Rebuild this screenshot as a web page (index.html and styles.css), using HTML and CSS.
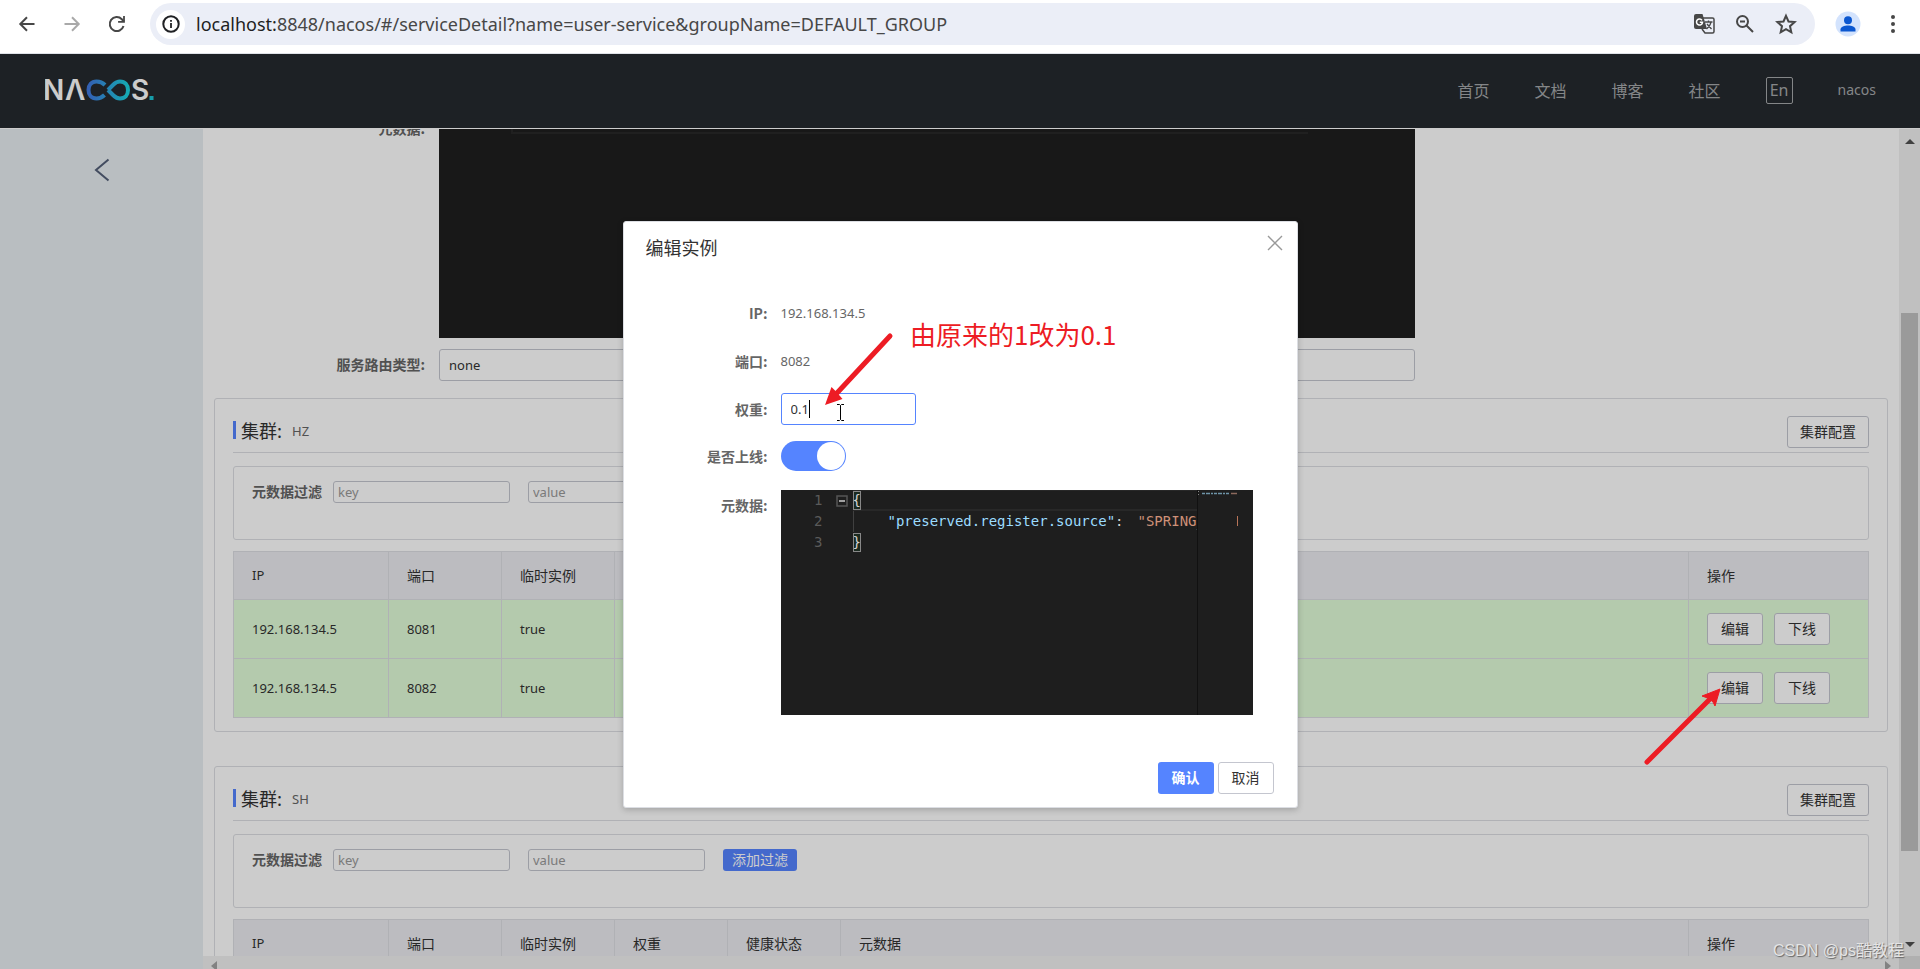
FILE: index.html
```html
<!DOCTYPE html>
<html lang="zh-CN">
<head>
<meta charset="utf-8">
<title>Nacos</title>
<link rel="stylesheet" href="styles.css">
</head>
<body>
<div class="browser">
  <button class="tool" aria-label="后退"><svg width="20" height="20" viewBox="0 0 20 20"><path d="M17.5 10H3.5M10 3.300L3.300 10l6.700 6.700" fill="none" stroke="#474747" stroke-width="2"/></svg></button>
  <button class="tool" aria-label="前进"><svg width="20" height="20" viewBox="0 0 20 20"><path d="M2.500 10h14M10 3.300l6.700 6.700-6.700 6.700" fill="none" stroke="#a9a9a9" stroke-width="2"/></svg></button>
  <button class="tool" aria-label="刷新"><svg width="20" height="20" viewBox="0 0 20 20"><path d="M16.500 12a7 7 0 1 1-1.700-6.800L17 7.500" fill="none" stroke="#474747" stroke-width="2"/><path d="M17.900 2v6.800h-6.800V7h5V2z" fill="#474747"/></svg></button>
  <div class="address">
    <span class="info"><svg width="18" height="18" viewBox="0 0 18 18"><circle cx="9" cy="9" r="7.700" fill="none" stroke="#202124" stroke-width="2"/><path d="M9 8v5M9 5v1.800" stroke="#202124" stroke-width="1.800"/></svg></span>
    <span class="url"><b>localhost:</b>8848/nacos/#/serviceDetail?name=user-service&amp;groupName=DEFAULT_GROUP</span>
    <svg width="22" height="22" viewBox="0 0 22 22"><path d="M10 5h9.500a1.500 1.500 0 0 1 1.500 1.500v12a1.500 1.500 0 0 1-1.500 1.500H12L9 16" fill="none" stroke="#474747" stroke-width="1.500"/><path d="M3 1h6.500l4.500 15H3a2 2 0 0 1-2-2V3a2 2 0 0 1 2-2z" fill="#474747"/><path d="M9 7.300A3 3 0 1 0 9.500 9.300H6.800" fill="none" stroke="#fff" stroke-width="1.500"/><path d="M12 9h7.500M15.500 7.500V9M18 9c-.5 3-2 5-4.500 7M14 11l4.500 5" fill="none" stroke="#474747" stroke-width="1.300"/></svg>
    <svg width="20" height="20" viewBox="0 0 20 20"><circle cx="7.500" cy="7.500" r="5.500" fill="none" stroke="#474747" stroke-width="2"/><path d="M11.500 11.500L18 18M5 7.500h5" stroke="#474747" stroke-width="2" fill="none"/></svg>
    <svg width="22" height="22" viewBox="0 0 22 22"><path d="M11 2.800l2.500 5.700 6.100.6-4.600 4.100 1.300 6.100-5.300-3.200-5.300 3.200L7 13.200 2.400 9.100l6.100-.6z" fill="none" stroke="#474747" stroke-width="2"/></svg>
  </div>
  <button class="avatar" aria-label="个人资料"><svg width="26" height="26" viewBox="0 0 26 26"><circle cx="13" cy="13" r="12.500" fill="#d3e3fd"/><circle cx="13" cy="9.200" r="4" fill="#0b57d0"/><path d="M5.500 20.500v-2c0-2.700 4-4 7.500-4s7.500 1.300 7.500 4v2z" fill="#0b57d0"/></svg></button>
  <button class="more" aria-label="菜单"><svg width="6" height="20" viewBox="0 0 6 20"><g fill="#474747"><circle cx="3" cy="3" r="2"/><circle cx="3" cy="10" r="2"/><circle cx="3" cy="17" r="2"/></g></svg></button>
</div>

<div class="app">
  <header class="topbar">
    <a class="logo" href="#" aria-label="Nacos"><svg width="110" height="36" viewBox="0 0 110 36">
      <defs><linearGradient id="wave" x1="0" x2="1" y1="0" y2="0"><stop offset="0" stop-color="#4078e0"/><stop offset="1" stop-color="#1cd5e0"/></linearGradient></defs>
      <g class="letters"><text x="-2" y="28">N</text><text x="20" y="28">Λ</text><text x="86" y="28">S</text></g>
      <path d="M60 13C57 10 54.500 9.500 51.500 9.500c-5 0-8 3.500-8 8.500s3 8.500 8 8.500c3 0 5.500-1 8-3.500M63 18l5.500-5.500c2-2 4-3 6.500-3 5 0 8 3.500 8 8.500s-3 8.500-8 8.500c-2.500 0-4.500-1-6.500-3L63 18" fill="none" stroke="url(#wave)" stroke-width="4"/>
      <rect x="104.500" y="24" width="4" height="4" fill="#1cc5d5"/></svg></a>
    <nav class="nav">
      <a href="#">首页</a><a href="#">文档</a><a href="#">博客</a><a href="#">社区</a>
      <button class="lang">En</button><a class="user" href="#">nacos</a>
    </nav>
  </header>
  <div class="body">
    <aside class="side"><button class="back" aria-label="返回"><svg width="16" height="24" viewBox="0 0 16 24"><path d="M14.500 1.500L2 12l12.500 10.500" fill="none" stroke="#546078" stroke-width="2"/></svg></button></aside>
    <div class="pane">
      <main class="content">
        <div class="field"><span class="label">元数据:</span><div class="dark"><div class="dark-line"></div></div></div>
        <div class="field"><label class="label" for="route">服务路由类型:</label><input id="route" class="box latin" value="none"></div>

        <section class="card">
          <div class="card-head"><h2>集群:</h2><span class="latin cluster">HZ</span><button class="btn">集群配置</button></div>
          <div class="filter"><label for="k1">元数据过滤</label><input id="k1" class="latin" placeholder="key"><input class="latin" aria-label="value" placeholder="value"><button class="add">添加过滤</button></div>
          <table>
            <colgroup><col class="c-ip"><col class="c-s"><col class="c-s"><col class="c-s"><col class="c-s"><col><col class="c-op"></colgroup>
            <thead><tr><th class="latin">IP</th><th>端口</th><th>临时实例</th><th>权重</th><th>健康状态</th><th>元数据</th><th>操作</th></tr></thead>
            <tbody class="latin">
              <tr><td>192.168.134.5</td><td>8081</td><td>true</td><td>1</td><td>true</td><td>preserved.register.source=SPRING_CLOUD</td><td><div class="ops"><button class="btn">编辑</button><button class="btn">下线</button></div></td></tr>
              <tr><td>192.168.134.5</td><td>8082</td><td>true</td><td>1</td><td>true</td><td>preserved.register.source=SPRING_CLOUD</td><td><div class="ops"><button class="btn">编辑</button><button class="btn">下线</button></div></td></tr>
            </tbody>
          </table>
        </section>

        <section class="card">
          <div class="card-head"><h2>集群:</h2><span class="latin cluster">SH</span><button class="btn">集群配置</button></div>
          <div class="filter"><label for="k2">元数据过滤</label><input id="k2" class="latin" placeholder="key"><input class="latin" aria-label="value" placeholder="value"><button class="add">添加过滤</button></div>
          <table>
            <colgroup><col class="c-ip"><col class="c-s"><col class="c-s"><col class="c-s"><col class="c-s"><col><col class="c-op"></colgroup>
            <thead><tr><th class="latin">IP</th><th>端口</th><th>临时实例</th><th>权重</th><th>健康状态</th><th>元数据</th><th>操作</th></tr></thead>
          </table>
        </section>
      </main>
      <div class="hbar"><svg width="6" height="10" viewBox="0 0 6 10"><path d="M6 0v10L0 5z" fill="#a3a3a3"/></svg><svg width="6" height="10" viewBox="0 0 6 10"><path d="M0 0v10l6-5z" fill="#a3a3a3"/></svg></div>
    </div>
    <div class="vbar">
      <svg width="10" height="5" viewBox="0 0 10 5"><path d="M0 5h10L5 0z" fill="#505050"/></svg>
      <div class="track"><div class="thumb"></div></div>
      <svg width="10" height="5" viewBox="0 0 10 5"><path d="M0 0h10L5 5z" fill="#505050"/></svg>
      <div class="corner"></div>
    </div>
  </div>

  <div class="mask">
    <div class="modal" role="dialog" aria-labelledby="mt">
      <div class="modal-head"><h1 id="mt">编辑实例</h1><button class="close" aria-label="关闭"><svg width="16" height="16" viewBox="0 0 16 16"><path d="M1 1l14 14M15 1L1 15" stroke="#999" stroke-width="1.400"/></svg></button></div>
      <div class="form">
        <span class="label">IP:</span><span class="latin val">192.168.134.5</span>
        <span class="label">端口:</span><span class="latin val">8082</span>
        <label class="label" for="w">权重:</label><span class="weight"><input id="w" class="latin" value="0.1"><i class="caret"></i></span>
        <label class="label" for="on">是否上线:</label><input id="on" class="switch" type="checkbox" checked>
        <span class="label meta">元数据:</span>
        <div class="editor">
          <div class="gutter"><span>1</span><span>2</span><span>3</span></div>
          <div class="fold"><svg width="12" height="12" viewBox="0 0 12 12"><path d="M1 1h10v10H1z" fill="none" stroke="#555" stroke-width="1.500"/><path d="M3 6h6" stroke="#ccc" stroke-width="1.500"/></svg></div>
          <div class="code">
            <div class="line current"><span class="brace">{</span></div>
            <div class="line inner"><span class="key">"preserved.register.source"</span>:<span class="str">"SPRING_CLOUD"</span></div>
            <div class="line"><span class="brace">}</span></div>
          </div>
          <div class="minimap"><svg width="56" height="40" viewBox="0 0 56 40"><path d="M4 3.500h27" stroke="#6e94a8" stroke-width="1.500" stroke-dasharray="3 1 4 1 2 1"/><path d="M33 3.500h6" stroke="#8d6a5d" stroke-width="1.500"/><path d="M39.500 26v10" stroke="#b87458"/><path d="M.5 1v1M.5 4v1" stroke="#888"/></svg></div>
        </div>
      </div>
      <div class="modal-foot"><button class="ok">确认</button><button class="btn">取消</button></div>
    </div>
  </div>
</div>

<svg class="mark mark-weight" width="72" height="78" viewBox="0 0 72 78"><path d="M67 5L14 62" stroke="#ed1c24" stroke-width="5" stroke-linecap="round"/><path d="M2 74L8.500 56l5 5 6 7z" fill="#ed1c24"/></svg>
<span class="note">由原来的1改为0.1</span>
<svg class="mark ibeam" width="9" height="17" viewBox="0 0 9 17"><path d="M1 .5h2.500l1 1 1-1H8M1 16.500h2.500l1-1 1 1H8M4.500 1.500v14" fill="none" stroke="#000"/></svg>
<svg class="mark mark-edit" width="80" height="82" viewBox="0 0 80 82"><path d="M5 77L68 14" stroke="#ed1c24" stroke-width="5" stroke-linecap="round"/><path d="M78 4L60 11l7 2.500 4 3.500 2 4z" fill="#ed1c24" stroke="#ed1c24"/></svg>
<span class="watermark">CSDN @ps酷教程</span>
</body>
</html>
```
FILE: styles.css
```css
* { box-sizing: border-box; }
body {
  margin: 0; height: 100vh; display: flex; flex-direction: column; overflow: hidden; position: relative;
  font: 14px/20px "Noto Sans CJK SC", sans-serif; color: #333; background: #fff;
}
button, input { font: inherit; margin: 0; }
button { padding: 0; border: 0; background: none; }
a { text-decoration: none; color: inherit; }
svg { display: block; flex: none; }
h1, h2 { margin: 0; font-weight: 400; }
.latin { font-family: "Noto Sans", "Noto Sans CJK SC", sans-serif; font-size: 13px; }

.browser { flex: none; height: 54px; padding: 3px 24px 8px 17px; display: flex; align-items: center; border-bottom: 1px solid #dfe2e8; }
.tool { width: 20px; margin-right: 25px; }
.address { flex: 1; height: 42px; margin-left: -2px; border-radius: 21px; background: #ebeef7; display: flex; align-items: center; gap: 20px; padding: 0 18px 0 6px; }
.info { width: 29px; height: 29px; border-radius: 50%; background: #fff; display: flex; align-items: center; justify-content: center; }
.url { flex: 1; margin-left: -9px; font: 18px/24px "Noto Sans", sans-serif; color: #474747; white-space: nowrap; }
.url b { font-weight: 400; color: #1f1f1f; }
.avatar { margin-left: 20px; }
.more { margin-left: 29px; }

.app { flex: 1; min-height: 0; position: relative; display: flex; flex-direction: column; }
.topbar { flex: none; height: 74px; background: #252a2f; display: flex; align-items: center; justify-content: space-between; padding: 0 44px 2px 45px; }
.letters { font: 600 28px Inter, sans-serif; fill: #fff; }
.nav { display: flex; align-items: center; gap: 45px; color: #a6a8aa; font-size: 16px; }
.lang { width: 27px; height: 27px; border: 1px solid #a6a8aa; border-radius: 2px; color: inherit; font: 16px/22px "Noto Sans", sans-serif; }
.user { font: 14px/20px "Noto Sans", sans-serif; }
.body { flex: 1; min-height: 0; display: flex; border-top: 1px solid #fff; }
.side { width: 203px; background: #e8eef2; padding: 29px 0 0 94px; }
.pane { flex: 1; min-width: 0; display: flex; flex-direction: column; }
.content { flex: 1; min-height: 0; overflow: hidden; padding: 0 11px; }
.hbar { flex: none; height: 13px; background: #f1f1f1; display: flex; justify-content: space-between; padding: 5px 8px 0; }
.vbar { width: 21px; background: #f1f1f1; display: flex; flex-direction: column; align-items: center; padding-top: 10px; }
.track { flex: 1; width: 17px; margin: 4px 0; padding-top: 165px; }
.thumb { height: 86%; background: #c1c1c1; }
.corner { width: 100%; height: 13px; margin-top: 9px; background: #dcdcdc; }

.field { display: grid; grid-template-columns: 225px 58.3%; margin-bottom: 11px; }
.field:first-child { margin-top: -16px; }
.label { text-align: right; font-weight: 700; line-height: 30px; color: #666; padding-right: 14px; }
.dark { height: 225px; background: #1e1e1e; padding: 16px 107px 0 72px; }
.dark-line { height: 5px; border: solid #282828; border-width: 0 0 2px 2px; }
.box { height: 32px; border: 1px solid #c4c6cf; border-radius: 3px; padding: 0 9px; color: #333; background: #fff; }

.card { margin: 17px 0 34px; border: 1px solid #dcdee3; border-radius: 3px; padding: 17px 18px 13px; }
.card-head { display: flex; align-items: flex-start; height: 37px; border-bottom: 1px solid #dcdee3; }
.card-head h2 { font-size: 18px; line-height: 18px; border-left: 3px solid #5584ff; padding-left: 5px; margin-top: 5px; }
.cluster { margin: 5px auto 0 10px; color: #666; }
.btn { height: 32px; padding: 0 13px 2px; border: 1px solid #c4c6cf; border-radius: 3px; background: #fff; color: #333; font: 14px/20px "Noto Sans CJK SC", sans-serif; }
.card-head .btn { padding: 0 12px 2px; }
.filter { margin: 13px 0 11px; height: 74px; border: 1px solid #dcdee3; border-radius: 3px; padding: 14px 18px; display: flex; align-items: flex-start; }
.filter label { font-weight: 700; color: #666; line-height: 20px; margin-right: 11px; }
.filter input { width: 177px; height: 22px; border: 1px solid #c4c6cf; border-radius: 3px; padding: 0 4px; margin-right: 18px; background: #fff; }
.filter input::placeholder { color: #999; }
.add { height: 22px; padding: 0 9px 2px; border-radius: 3px; background: #5584ff; color: #fff; }

table { width: 100%; table-layout: fixed; border-collapse: collapse; }
.c-ip { width: 155px; }
.c-s { width: 113px; }
.c-op { width: 180px; }
th, td { border: 1px solid #dcdee3; padding: 0 18px; text-align: left; font-weight: 400; }
th { height: 48px; padding-bottom: 2px; background: #ebecf0; }
td { height: 59px; background: #e2fdd9; white-space: nowrap; }
.ops { display: flex; gap: 11px; }

.mask { position: absolute; inset: 0; background: rgba(0, 0, 0, .2); display: flex; justify-content: center; align-items: flex-start; padding-top: 167px; }
.modal { width: 675px; background: #fff; border: 1px solid #dcdee3; border-radius: 3px; box-shadow: 0 2px 6px rgba(0, 0, 0, .2); }
.modal-head { display: flex; justify-content: space-between; padding: 13px 14px 0 22px; }
.modal-head h1 { font-size: 18px; line-height: 24px; }
.close { height: 16px; }
.form { display: grid; grid-template-columns: 157px 472px; row-gap: 16px; align-items: center; margin-top: 38px; }
.form .label { padding-right: 13px; }
.val { color: #666; line-height: 32px; }
.weight { position: relative; display: flex; }
.weight input { width: 135px; height: 32px; border: 1px solid #5584ff; border-radius: 3px; padding: 0 9px; color: #333; outline: 0; }
.caret { position: absolute; left: 28px; top: 7px; width: 1px; height: 18px; background: #000; }
.switch { appearance: none; width: 65px; height: 30px; border-radius: 15px; background: #5584ff; display: flex; justify-content: flex-end; padding: 1px; }
.switch::before { content: ""; width: 28px; height: 28px; border-radius: 50%; background: #fff; }
.form .meta { align-self: start; line-height: 36px; }
.editor { height: 225px; margin-top: 3px; background: #1e1e1e; display: grid; grid-template-columns: 42px 30px 1fr 56px; font: 14px/21px "DejaVu Sans Mono", monospace; color: #d4d4d4; overflow: hidden; }
.gutter { display: flex; flex-direction: column; text-align: right; color: #5a5a5a; }
.fold { padding: 5px 0 0 13px; }
.code { overflow: hidden; }
.line { height: 21px; white-space: nowrap; }
.current { border: 2px solid #282828; border-width: 1px 0 2px; line-height: 18px; }
.brace { display: inline-block; line-height: 19px; outline: 1px solid #888; outline-offset: -1px; background: #1b2a20; }
.inner { padding-left: 34px; border-left: 1px solid #404040; }
.key { color: #9cdcfe; }
.str { color: #ce9178; margin-left: 14px; }
.minimap { border-left: 1px solid #111; }
.modal-foot { display: flex; justify-content: flex-end; gap: 4px; padding: 47px 23px 13px; }
.ok { height: 32px; padding: 0 14px 2px; border-radius: 3px; background: #5584ff; color: #fff; font-weight: 700; }

.mark, .note, .watermark { position: absolute; }
.mark-weight { left: 823px; top: 331px; }
.mark-edit { left: 1642px; top: 685px; }
.ibeam { left: 836px; top: 404px; }
.note { left: 910px; top: 316px; font-size: 26px; line-height: 36px; color: #ed1c24; }
.watermark { right: 16px; bottom: 6px; font: 16px/24px "Liberation Sans", "Noto Sans CJK SC", sans-serif; color: #e4e4e4; text-shadow: 1px 1px 1px #666; }
```
